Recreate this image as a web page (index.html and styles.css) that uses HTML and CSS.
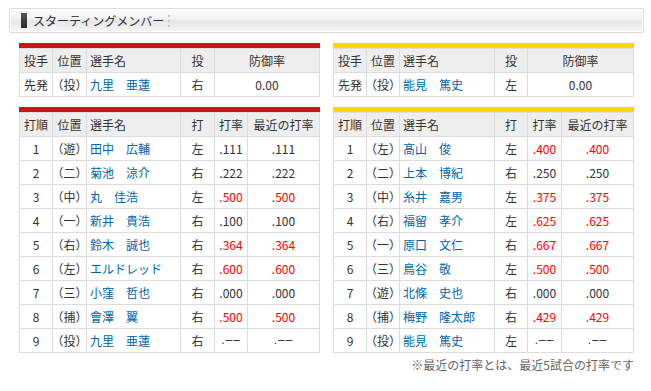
FILE: index.html
```html
<!DOCTYPE html>
<html lang="ja">
<head>
<meta charset="utf-8">
<link rel="stylesheet" href="styles.css">
</head>
<body>
<div class="title-box">
  <span class="title-mark"></span>
  <span class="title-text">スターティングメンバー</span>
  <span class="title-dots"><i></i><i></i><i></i></span>
</div>

<div class="pair pitchers">
  <div class="team red">
    <div class="grid pgrid pl">
      <div class="h">投手</div><div class="h">位置</div><div class="h l">選手名</div><div class="h">投</div><div class="h">防御率</div>
      <div>先発</div><div>（投）</div><div class="l name">九里　亜蓮</div><div>右</div><div>0.00</div>
    </div>
  </div>
  <div class="team yellow">
    <div class="grid pgrid pr">
      <div class="h">投手</div><div class="h">位置</div><div class="h l">選手名</div><div class="h">投</div><div class="h">防御率</div>
      <div>先発</div><div>（投）</div><div class="l name">能見　篤史</div><div>左</div><div>0.00</div>
    </div>
  </div>
</div>

<div class="pair batters">
  <div class="team red">
    <div class="grid bgrid bl">
      <div class="h">打順</div><div class="h">位置</div><div class="h l">選手名</div><div class="h">打</div><div class="h">打率</div><div class="h">最近の打率</div>
      <div>1</div><div>（遊）</div><div class="l name">田中　広輔</div><div>左</div><div>.111</div><div>.111</div>
      <div>2</div><div>（二）</div><div class="l name">菊池　涼介</div><div>右</div><div>.222</div><div>.222</div>
      <div>3</div><div>（中）</div><div class="l name">丸　佳浩</div><div>左</div><div class="hot">.500</div><div class="hot">.500</div>
      <div>4</div><div>（一）</div><div class="l name">新井　貴浩</div><div>右</div><div>.100</div><div>.100</div>
      <div>5</div><div>（右）</div><div class="l name">鈴木　誠也</div><div>右</div><div class="hot">.364</div><div class="hot">.364</div>
      <div>6</div><div>（左）</div><div class="l name">エルドレッド</div><div>右</div><div class="hot">.600</div><div class="hot">.600</div>
      <div>7</div><div>（三）</div><div class="l name">小窪　哲也</div><div>右</div><div>.000</div><div>.000</div>
      <div>8</div><div>（捕）</div><div class="l name">會澤　翼</div><div>右</div><div class="hot">.500</div><div class="hot">.500</div>
      <div>9</div><div>（投）</div><div class="l name">九里　亜蓮</div><div>右</div><div class="nil">.––</div><div class="nil">.––</div>
    </div>
  </div>
  <div class="team yellow">
    <div class="grid bgrid br">
      <div class="h">打順</div><div class="h">位置</div><div class="h l">選手名</div><div class="h">打</div><div class="h">打率</div><div class="h">最近の打率</div>
      <div>1</div><div>（左）</div><div class="l name">髙山　俊</div><div>左</div><div class="hot">.400</div><div class="hot">.400</div>
      <div>2</div><div>（二）</div><div class="l name">上本　博紀</div><div>右</div><div>.250</div><div>.250</div>
      <div>3</div><div>（中）</div><div class="l name">糸井　嘉男</div><div>左</div><div class="hot">.375</div><div class="hot">.375</div>
      <div>4</div><div>（右）</div><div class="l name">福留　孝介</div><div>左</div><div class="hot">.625</div><div class="hot">.625</div>
      <div>5</div><div>（一）</div><div class="l name">原口　文仁</div><div>右</div><div class="hot">.667</div><div class="hot">.667</div>
      <div>6</div><div>（三）</div><div class="l name">鳥谷　敬</div><div>左</div><div class="hot">.500</div><div class="hot">.500</div>
      <div>7</div><div>（遊）</div><div class="l name">北條　史也</div><div>右</div><div>.000</div><div>.000</div>
      <div>8</div><div>（捕）</div><div class="l name">梅野　隆太郎</div><div>右</div><div class="hot">.429</div><div class="hot">.429</div>
      <div>9</div><div>（投）</div><div class="l name">能見　篤史</div><div>左</div><div class="nil">.––</div><div class="nil">.––</div>
    </div>
    <p class="note">※最近の打率とは、最近5試合の打率です</p>
  </div>
</div>
</body>
</html>
```

FILE: styles.css
```css
html, body {
  margin: 0;
  padding: 0;
  background: #fff;
}
body {
  font-family: "Noto Sans CJK JP", "Noto Sans", sans-serif;
  font-size: 12px;
  color: #333;
}
.title-box {
  box-sizing: border-box;
  margin: 8px 0 0 9px;
  width: 635px;
  height: 25px;
  border: 1px solid #dcdcdc;
  border-radius: 2px;
  background: linear-gradient(#fdfdfd 0%, #f3f3f3 40%, #e7e7e7 55%, #eeeeee 75%, #f6f6f6 100%);
  box-shadow: inset 0 0 0 1px #fff;
  display: flex;
  align-items: center;
  padding-left: 11px;
}
.title-mark {
  width: 6px;
  height: 15px;
  background: linear-gradient(#555, #2a2a2a);
}
.title-text {
  margin-left: 6px;
  font-size: 12px;
  color: #2b2b3a;
  line-height: 15px;
}
.title-dots {
  margin-left: 4px;
  display: flex;
  flex-direction: column;
  gap: 3px;
}
.title-dots i {
  display: block;
  width: 2px;
  height: 2px;
  background: #c8c8c8;
}
.pair {
  display: flex;
  gap: 13px;
  padding-left: 19px;
}
.pitchers { margin-top: 10px; }
.batters { margin-top: 10px; }
.team {
  width: 301px;
}
.team.red { border-top: 5px solid #d0121b; }
.team.yellow { border-top: 5px solid #fad900; }
.grid {
  display: grid;
  gap: 1px;
  background: #dddddd;
  border: 1px solid #dddddd;
  grid-auto-rows: 23px;
}
.grid > div {
  background: #fff;
  display: flex;
  align-items: center;
  justify-content: center;
  white-space: nowrap;
  line-height: 23px;
}
.grid > div.h { background: #eeeeee; color: #333; }
.grid > div.l { justify-content: flex-start; padding-left: 3px; }
.grid > div.name { color: #0066aa; }
.grid > div.hot { color: #ff0000; }
.grid > div.nil { font-family: "Liberation Sans", sans-serif; letter-spacing: 1px; }
.pl { grid-template-columns: 32px 33px 93px 33px 104px; }
.pr { grid-template-columns: 32px 32px 94px 32px 105px; }
.bl { grid-template-columns: 32px 33px 93px 33px 32px 71px; }
.br { grid-template-columns: 32px 32px 94px 32px 33px 71px; }
.note {
  margin: 4px 0 0;
  text-align: right;
  color: #666;
  font-size: 12px;
  line-height: 16px;
}
```
